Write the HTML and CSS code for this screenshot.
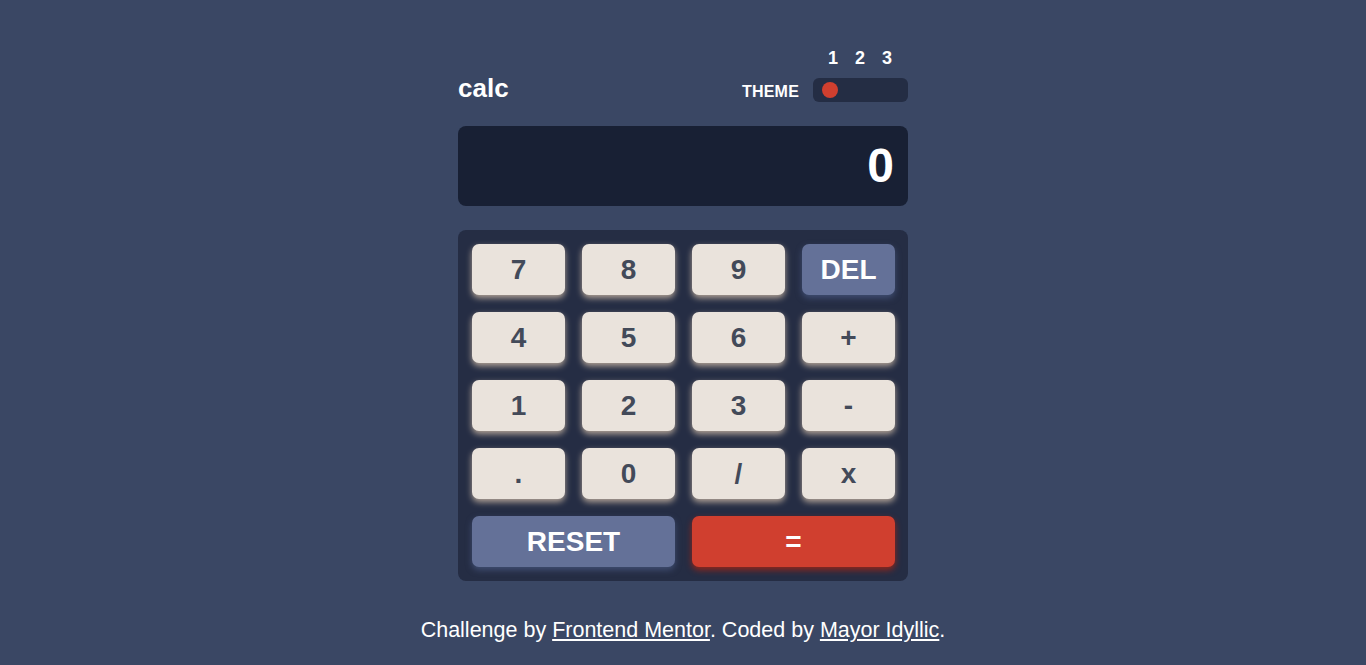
FILE: index.html
```html
<!DOCTYPE html>
<html lang="en">
<head>
<meta charset="utf-8">
<title>Calculator</title>
<link rel="stylesheet" href="styles.css">
</head>
<body>
<main class="calc">
  <header class="header">
    <h1 class="logo">calc</h1>
    <div class="theme">
      <span class="theme-label">THEME</span>
      <div class="theme-switch">
        <div class="theme-nums"><span>1</span><span>2</span><span>3</span></div>
        <div class="toggle"><span class="dot"></span></div>
      </div>
    </div>
  </header>
  <section class="display">0</section>
  <section class="keypad">
    <button class="key">7</button>
    <button class="key">8</button>
    <button class="key">9</button>
    <button class="key key-alt">DEL</button>
    <button class="key">4</button>
    <button class="key">5</button>
    <button class="key">6</button>
    <button class="key">+</button>
    <button class="key">1</button>
    <button class="key">2</button>
    <button class="key">3</button>
    <button class="key">-</button>
    <button class="key">.</button>
    <button class="key">0</button>
    <button class="key">/</button>
    <button class="key">x</button>
    <button class="key key-alt key-wide">RESET</button>
    <button class="key key-eq key-wide">=</button>
  </section>
</main>
<footer class="footer">Challenge by <a href="#">Frontend Mentor</a>. Coded by <a href="#">Mayor Idyllic</a>.</footer>
</body>
</html>
```
FILE: styles.css
```css
* { box-sizing: border-box; }
html, body { margin: 0; padding: 0; }
body {
  background: #3a4764;
  font-family: "Liberation Sans", Arial, sans-serif;
  color: #fff;
  min-height: 665px;
}
.calc {
  width: 450px;
  margin: 0 auto;
  padding-top: 48px;
}
.header {
  display: flex;
  justify-content: space-between;
  align-items: flex-end;
  height: 54px;
}
.logo {
  margin: 0 0 1px 0;
  font-size: 26px;
  font-weight: 700;
  line-height: 1;
}
.theme {
  display: flex;
  align-items: flex-end;
  gap: 14px;
}
.theme-label {
  font-size: 16px;
  font-weight: 700;
  line-height: 1;
  margin-bottom: 2px;
  letter-spacing: 0.2px;
}
.theme-switch {
  display: flex;
  flex-direction: column;
  width: 95px;
}
.theme-nums {
  display: flex;
  justify-content: flex-end;
  gap: 17px;
  padding-right: 16px;
  font-size: 18px;
  font-weight: 700;
  line-height: 1;
  margin-bottom: 11px;
}
.toggle {
  height: 24px;
  background: #242d44;
  border-radius: 6px;
  display: flex;
  align-items: center;
  padding-left: 9px;
}
.dot {
  width: 16px;
  height: 16px;
  border-radius: 50%;
  background: #d03f2f;
}
.display {
  margin-top: 24px;
  height: 80px;
  background: #182034;
  border-radius: 8px;
  display: flex;
  align-items: center;
  justify-content: flex-end;
  padding: 0 14px 0 0;
  font-size: 48px;
  font-weight: 700;
  line-height: 1;
}
.keypad {
  margin-top: 24px;
  background: #252d44;
  border-radius: 8px;
  padding: 14px 13px 14px 14px;
  display: grid;
  grid-template-columns: repeat(4, 93px);
  grid-auto-rows: 51px;
  column-gap: 17px;
  row-gap: 17px;
}
.key {
  border: none;
  border-radius: 7px;
  background: #eae3dc;
  color: #434a59;
  font-family: "Liberation Sans", Arial, sans-serif;
  font-size: 28px;
  font-weight: 700;
  box-shadow: 0 3px 6px #b3a497;
  padding: 0;
  cursor: pointer;
}
.key-alt {
  background: #647198;
  color: #fff;
  font-size: 28px;
  box-shadow: 0 3px 6px #404e72;
}
.key-eq {
  background: #d03f2f;
  color: #fff;
  font-size: 28px;
  box-shadow: 0 3px 6px #93261a;
}
.key-wide { grid-column: span 2; }
.footer {
  text-align: center;
  margin-top: 37px;
  font-size: 21.5px;
  line-height: 24px;
}
.footer a { color: #fff; }
```
